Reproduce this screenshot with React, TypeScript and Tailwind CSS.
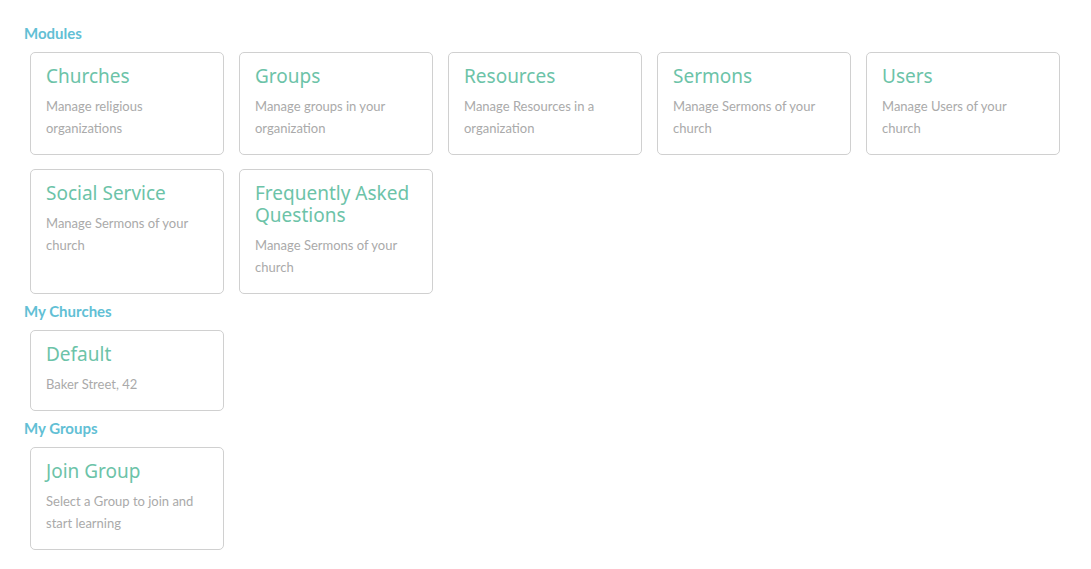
const modules = [
  { title: 'Churches', text: 'Manage religious organizations' },
  { title: 'Groups', text: 'Manage groups in your organization' },
  { title: 'Resources', text: 'Manage Resources in a organization' },
  { title: 'Sermons', text: 'Manage Sermons of your church' },
  { title: 'Users', text: 'Manage Users of your church' },
  { title: 'Social Service', text: 'Manage Sermons of your church' },
  { title: 'Frequently Asked Questions', text: 'Manage Sermons of your church' },
]

const Card = ({ title, text }: { title: string; text: string }) => (
  <div className="border border-[#d0d0d0] rounded-[5px] pt-3 pb-[15px] pl-[15px] pr-4 bg-white">
    <h4 className="font-['Noto_Sans',sans-serif] text-[19px] leading-[22px] text-[#6cc3a8] mb-2">{ title }</h4>
    <p className="font-['Lato',sans-serif] text-[13px] leading-[22px] text-[#aaaaaa]">{ text }</p>
  </div>
)

const Section = ({ heading, items }: { heading: string; items: { title: string; text: string }[] }) => (
  <section>
    <h3 className="font-['Lato',sans-serif] font-bold text-[15px] leading-5 text-[#62bfd5]">{ heading }</h3>
    <div className="grid grid-cols-5 gap-x-[15px] gap-y-[14px] mt-[9px] ml-1.5 w-[1030px]">
      {items.map(item =>
        <Card key={ item.title } { ...item } />
      )}
    </div>
  </section>
)

export default function App() {
  return (
    <div className="min-h-[569px] bg-white pt-[23px] pl-6 flex flex-col gap-[7px]">
      <Section heading="Modules" items={ modules } />
      <Section heading="My Churches" items={[{ title: 'Default', text: 'Baker Street, 42' }]} />
      <Section heading="My Groups" items={[{ title: 'Join Group', text: 'Select a Group to join and start learning' }]} />
    </div>
  )
}
